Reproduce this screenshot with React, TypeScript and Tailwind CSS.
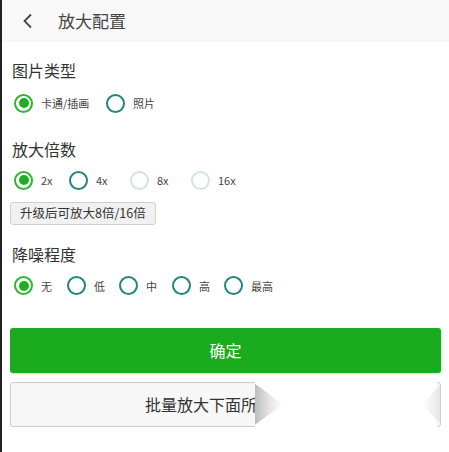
import React from 'react'

type Opt = { label: string; checked?: boolean; disabled?: boolean; w: string }

function Radio({ checked, disabled }: { checked?: boolean; disabled?: boolean }) {
  if (checked) {
    return (
      <span className="w-[19px] h-[19px] rounded-full border-2 border-[#2fb531] flex items-center justify-center">
        <span className="w-[10px] h-[10px] rounded-full bg-[#1fae22]" />
      </span>
    )
  }
  return (
    <span className={`w-[19px] h-[19px] rounded-full border-2 ${disabled ? 'border-[#d3e4e3]' : 'border-[#23857a]'}`} />
  )
}

function RadioRow({ opts }: { opts: Opt[] }) {
  return (
    <div className="flex items-center h-[20px] pl-[12px]">
      {opts.map(o => (
        <div key={o.label} className={`flex items-center ${o.w}`}>
          <Radio checked={o.checked} disabled={o.disabled} />
          <span className="ml-[8px] text-[11px] text-[#444]">{o.label}</span>
        </div>
      ))}
    </div>
  )
}

export default function App() {
  const font = { fontFamily: '"Noto Sans CJK SC", "Noto Sans", sans-serif' }
  return (
    <div className="w-[449px] h-[452px] bg-white border-l-2 border-[#222] overflow-hidden relative" style={font}>
      <div className="h-[42px] bg-[#f8f8f8] flex items-center">
        <svg width="12" height="16" viewBox="0 0 12 16" className="ml-[20px]">
          <path d="M9 1.5 L2.5 8 L9 14.5" fill="none" stroke="#444" strokeWidth="1.8" />
        </svg>
        <span className="ml-[24px] text-[17px] text-[#444]">放大配置</span>
      </div>

      <div className="pl-[10px] pt-[18px] text-[16px] leading-[20px] text-[#333]">图片类型</div>
      <div className="mt-[13px]">
        <RadioRow opts={[
          { label: '卡通/插画', checked: true, w: 'w-[92px]' },
          { label: '照片', w: 'w-[60px]' },
        ]} />
      </div>

      <div className="pl-[10px] pt-[26px] text-[16px] leading-[20px] text-[#333]">放大倍数</div>
      <div className="mt-[11px]">
        <RadioRow opts={[
          { label: '2x', checked: true, w: 'w-[55px]' },
          { label: '4x', w: 'w-[61px]' },
          { label: '8x', disabled: true, w: 'w-[61px]' },
          { label: '16x', disabled: true, w: 'w-[60px]' },
        ]} />
      </div>
      <div className="pl-[8px] mt-[9px]">
        <button className="h-[23px] px-[9px] text-[12.5px] text-[#333] bg-[#f1f1f1] border border-[#cfcfcf] rounded-[3px] leading-none">
          升级后可放大8倍/16倍
        </button>
      </div>

      <div className="pl-[10px] pt-[19px] text-[16px] leading-[20px] text-[#333]">降噪程度</div>
      <div className="mt-[12px]">
        <RadioRow opts={[
          { label: '无', checked: true, w: 'w-[53px]' },
          { label: '低', w: 'w-[52px]' },
          { label: '中', w: 'w-[53px]' },
          { label: '高', w: 'w-[52px]' },
          { label: '最高', w: 'w-[60px]' },
        ]} />
      </div>

      <div className="px-[8px] mt-[32px] flex flex-col gap-[9px]">
        <button className="h-[45px] w-[431px] rounded-[3px] bg-[#1aab1f] text-white text-[16px] shadow-[0_1px_2px_rgba(0,0,0,0.15)]">
          确定
        </button>
        <div className="relative h-[45px] w-[431px]">
          <button className="h-full w-full rounded-[3px] bg-[#f7f7f7] border border-[#cccccc] text-[16px] text-[#333] text-left pl-[134px]">
            批量放大下面所有
          </button>
          <div className="absolute top-[-2px] bottom-[-2px] left-[245px] right-[3px] bg-white [clip-path:polygon(0_0,100%_0,96%_50%,100%_100%,0_100%,0_50%)]" />
          <div className="absolute top-[2px] bottom-[2px] left-[245px] w-[28px] bg-gradient-to-r from-[#bcbcbc] via-[#e4e4e4] to-white [clip-path:polygon(0_0,100%_50%,0_100%)]" />
          <div className="absolute top-[4px] bottom-[4px] right-[1px] w-[18px] bg-gradient-to-l from-[#e6e6e6] to-white [clip-path:polygon(100%_0,0_50%,100%_100%)]" />
        </div>
      </div>
    </div>
  )
}
